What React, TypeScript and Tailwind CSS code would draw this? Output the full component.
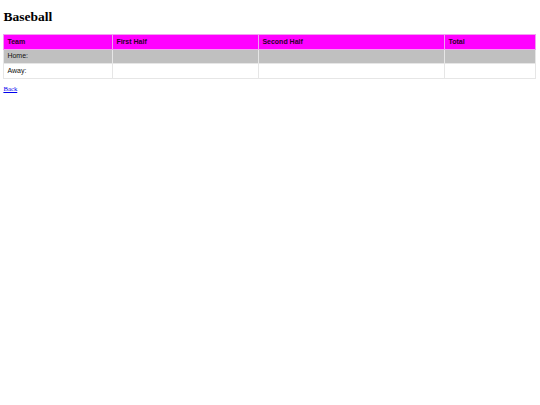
const rows = ['Home:', 'Away:'];

export default function App() {
  return (
    <div className="bg-white min-h-[405px] px-[3.4px] pt-[9px] font-['Liberation_Serif',serif] text-black">
      <h1 className="text-[13.5px] font-bold leading-[15.5px] mb-[9px]">Baseball</h1>
      <table className="w-[533px] border-collapse border border-[#e6e6e6] font-['Liberation_Sans',Arial,sans-serif] text-[7px] leading-[8px]">
        <thead>
          <tr className="bg-[#ff00ff] h-[15px]">
            <th className="w-[109px] border border-[#f0a0f0] px-[3px] text-left font-bold text-[#2a002a]">Team</th>
            <th className="w-[146px] border border-[#f0a0f0] px-[3px] text-left font-bold text-[#2a002a]">First Half</th>
            <th className="w-[186px] border border-[#f0a0f0] px-[3px] text-left font-bold text-[#2a002a]">Second Half</th>
            <th className="border border-[#f0a0f0] px-[3px] text-left font-bold text-[#2a002a]">Total</th>
          </tr>
        </thead>
        <tbody>
          {rows.map((team, i) => (
            <tr key={team} className={i === 0 ? 'bg-[#c0c0c0] h-[14.5px]' : 'bg-white h-[14.5px]'}>
              <td className="border border-[#e6e6e6] px-[3px] text-[#111]">{team}</td>
              <td className="border border-[#e6e6e6] px-[3px]"></td>
              <td className="border border-[#e6e6e6] px-[3px]"></td>
              <td className="border border-[#e6e6e6] px-[3px]"></td>
            </tr>
          ))}
        </tbody>
      </table>
      <p className="mt-[5px] text-[6.75px]">
        <a href="#" className="text-[#0000ee] underline">Back</a>
      </p>
    </div>
  );
}
